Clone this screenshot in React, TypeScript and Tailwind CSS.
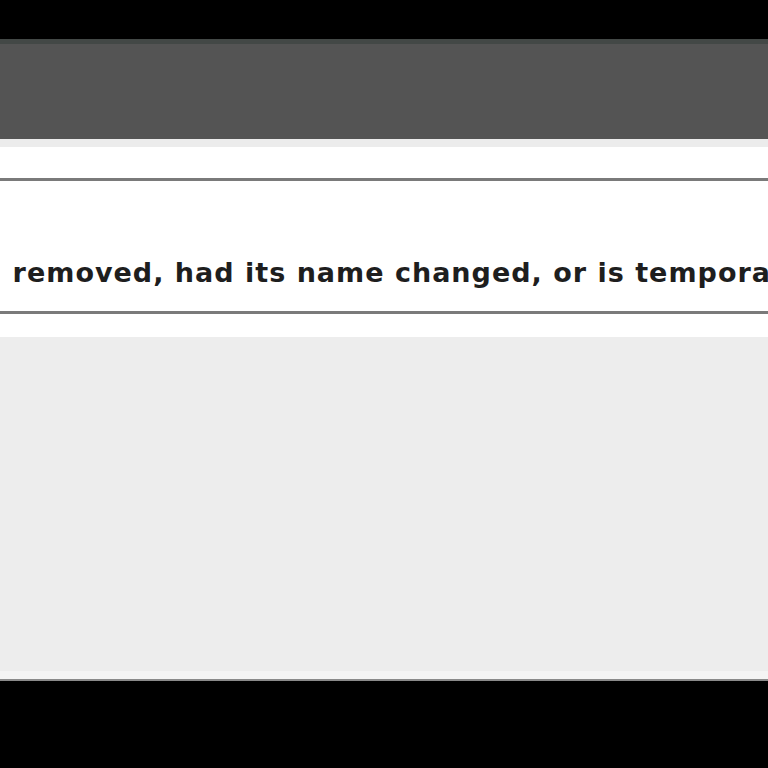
export default function App() {
  return (
    <div className="w-[768px] h-[768px] overflow-hidden bg-black flex flex-col" style={{ fontFamily: '"DejaVu Sans", Verdana, sans-serif' }}>
      <div className="h-[39px] bg-black shrink-0" />
      <div className="h-[100px] shrink-0 bg-[#545454] border-t-[5px] border-[#434846]" />
      <div className="h-[8px] shrink-0 bg-[#ececec]" />
      <div className="h-[31px] shrink-0 bg-white" />
      <div className="h-[136px] shrink-0 bg-white border-y-[3px] border-[#7a7a7a] flex items-center overflow-hidden">
        <div className="whitespace-nowrap text-[27px] leading-none font-bold text-[#1e1e1e] mt-[52px] ml-[-18px] tracking-[1px]">
          n removed, had its name changed, or is temporarily unavailable.
        </div>
      </div>
      <div className="h-[23px] shrink-0 bg-white" />
      <div className="h-[334px] shrink-0 bg-[#ededed]" />
      <div className="h-[10px] shrink-0 bg-[#f4f4f4] border-b-2 border-[#8a8a8a]" />
      <div className="flex-1 bg-black" />
    </div>
  );
}
